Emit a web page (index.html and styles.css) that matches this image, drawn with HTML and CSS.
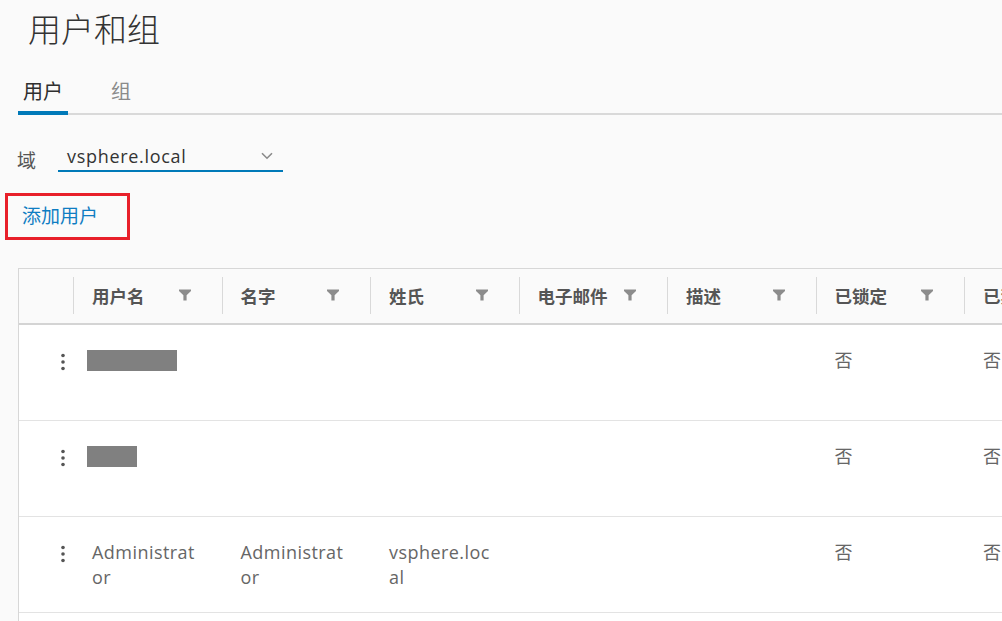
FILE: index.html
```html
<!DOCTYPE html>
<html lang="zh-CN">
<head>
<meta charset="utf-8">
<title>用户和组</title>
<link rel="stylesheet" href="styles.css">
</head>
<body>
<main class="page">
  <h1 class="title">用户和组</h1>

  <nav class="tabs">
    <div class="tab tab-active">用户</div>
    <div class="tab">组</div>
  </nav>

  <div class="domain">
    <span class="domain-label">域</span>
    <div class="select">
      <span class="select-value">vsphere.local</span>
      <svg class="chevron" width="12" height="8" viewBox="0 0 12 8"><path d="M1 1.2 L6 6.2 L11 1.2" fill="none" stroke="#8a8a8a" stroke-width="1.6"/></svg>
    </div>
  </div>

  <div class="actions">
    <div class="highlight"><a class="add-link">添加用户</a></div>
  </div>

  <div class="datagrid">
    <div class="grid-row grid-head">
      <div class="hcell hcell-blank"></div>
      <div class="hcell"><span>用户名</span><svg class="filter" width="12" height="12" viewBox="0 0 12 12"><path d="M0 0.5 H12 V2 L7.6 6.2 V11.5 H4.4 V6.2 L0 2 Z"/></svg></div>
      <div class="hcell"><span>名字</span><svg class="filter" width="12" height="12" viewBox="0 0 12 12"><path d="M0 0.5 H12 V2 L7.6 6.2 V11.5 H4.4 V6.2 L0 2 Z"/></svg></div>
      <div class="hcell"><span>姓氏</span><svg class="filter" width="12" height="12" viewBox="0 0 12 12"><path d="M0 0.5 H12 V2 L7.6 6.2 V11.5 H4.4 V6.2 L0 2 Z"/></svg></div>
      <div class="hcell"><span>电子邮件</span><svg class="filter" width="12" height="12" viewBox="0 0 12 12"><path d="M0 0.5 H12 V2 L7.6 6.2 V11.5 H4.4 V6.2 L0 2 Z"/></svg></div>
      <div class="hcell"><span>描述</span><svg class="filter" width="12" height="12" viewBox="0 0 12 12"><path d="M0 0.5 H12 V2 L7.6 6.2 V11.5 H4.4 V6.2 L0 2 Z"/></svg></div>
      <div class="hcell"><span>已锁定</span><svg class="filter" width="12" height="12" viewBox="0 0 12 12"><path d="M0 0.5 H12 V2 L7.6 6.2 V11.5 H4.4 V6.2 L0 2 Z"/></svg></div>
      <div class="hcell"><span>已禁用</span><svg class="filter" width="12" height="12" viewBox="0 0 12 12"><path d="M0 0.5 H12 V2 L7.6 6.2 V11.5 H4.4 V6.2 L0 2 Z"/></svg></div>
    </div>

    <div class="grid-row body-row">
      <div class="cell cell-action"><svg class="dots" width="6" height="18" viewBox="0 0 6 18"><circle cx="3" cy="2.5" r="1.8"/><circle cx="3" cy="9" r="1.8"/><circle cx="3" cy="15.5" r="1.8"/></svg></div>
      <div class="cell"><span class="redacted redacted-long"></span></div>
      <div class="cell"></div>
      <div class="cell"></div>
      <div class="cell"></div>
      <div class="cell"></div>
      <div class="cell">否</div>
      <div class="cell">否</div>
    </div>

    <div class="grid-row body-row">
      <div class="cell cell-action"><svg class="dots" width="6" height="18" viewBox="0 0 6 18"><circle cx="3" cy="2.5" r="1.8"/><circle cx="3" cy="9" r="1.8"/><circle cx="3" cy="15.5" r="1.8"/></svg></div>
      <div class="cell"><span class="redacted redacted-short"></span></div>
      <div class="cell"></div>
      <div class="cell"></div>
      <div class="cell"></div>
      <div class="cell"></div>
      <div class="cell">否</div>
      <div class="cell">否</div>
    </div>

    <div class="grid-row body-row">
      <div class="cell cell-action"><svg class="dots" width="6" height="18" viewBox="0 0 6 18"><circle cx="3" cy="2.5" r="1.8"/><circle cx="3" cy="9" r="1.8"/><circle cx="3" cy="15.5" r="1.8"/></svg></div>
      <div class="cell">Administrator</div>
      <div class="cell">Administrator</div>
      <div class="cell">vsphere.local</div>
      <div class="cell"></div>
      <div class="cell"></div>
      <div class="cell">否</div>
      <div class="cell">否</div>
    </div>

    <div class="grid-row body-row"></div>
  </div>
</main>
</body>
</html>
```

FILE: styles.css
```css
html, body {
  margin: 0;
  padding: 0;
  background: #fafafa;
  overflow: hidden;
}

body {
  font-family: "Open Sans", "Noto Sans CJK SC", sans-serif;
  color: #333;
}

.page {
  padding-left: 18px;
  width: 1200px;
}

.title {
  margin: 8px 0 0 10px;
  font-family: "Noto Sans CJK SC", sans-serif;
  font-size: 33px;
  line-height: 40px;
  font-weight: 300;
  color: #333;
}

.tabs {
  display: flex;
  gap: 38px;
  margin-top: 31px;
  border-bottom: 2px solid #d9d9d9;
  width: 984px;
}

.tab {
  font-family: "Noto Sans CJK SC", sans-serif;
  font-size: 20px;
  line-height: 24px;
  padding: 0 5px 8px;
  margin-bottom: -2px;
  border-bottom: 4px solid transparent;
  color: #8a8a8a;
}

.tab-active {
  color: #2f2f2f;
  border-bottom-color: #0079b8;
}

.domain {
  display: flex;
  align-items: flex-end;
  margin-top: 30px;
}

.domain-label {
  font-family: "Noto Sans CJK SC", sans-serif;
  font-size: 19px;
  line-height: 24px;
  color: #555;
  width: 41px;
  margin-left: -1px;
  padding-bottom: 0;
}

.select {
  display: flex;
  align-items: center;
  justify-content: space-between;
  width: 225px;
  box-sizing: border-box;
  height: 27px;
  padding: 0 10px 3px 9px;
  border-bottom: 2px solid #0079b8;
}

.select-value {
  font-size: 18px;
  line-height: 24px;
  color: #333;
  letter-spacing: 0.7px;
}

.chevron {
  display: block;
}

.actions {
  margin-top: 21px;
}

.highlight {
  display: inline-block;
  margin-left: -13px;
  border: 3px solid #e8202a;
  padding: 7px 29px 10px 14px;
}

.add-link {
  display: block;
  font-family: "Noto Sans CJK SC", sans-serif;
  font-size: 19px;
  line-height: 24px;
  color: #0f7dc2;
}

.datagrid {
  margin-top: 28px;
  border-top: 1px solid #d7d7d7;
  border-left: 1px solid #d7d7d7;
  width: 1094px;
}

.grid-row {
  display: grid;
  grid-template-columns: 54px repeat(7, 148.5px);
}

.grid-head {
  height: 52px;
  padding-bottom: 2px;
  align-items: center;
  background: #fafafa;
  border-bottom: 2px solid #d4d4d4;
}

.hcell {
  display: flex;
  align-items: center;
  justify-content: space-between;
  height: 37px;
  padding: 0 31px 0 18px;
  border-left: 1px solid #d9d9d9;
  font-family: "Noto Sans CJK SC", sans-serif;
  font-weight: 700;
  font-size: 17.5px;
  color: #555;
}

.hcell-blank {
  border-left: none;
}

.filter {
  fill: #8c8c8c;
  flex: none;
}

.body-row {
  height: 95px;
  background: #fff;
  border-bottom: 1px solid #e3e3e3;
}

.cell {
  padding: 23px 20px 0 19px;
  font-size: 18px;
  line-height: 25px;
  letter-spacing: 0.45px;
  color: #666;
  word-break: break-all;
}

.cell-action {
  display: flex;
  justify-content: flex-end;
  padding: 28px 7px 0 0;
}

.dots {
  fill: #555;
}

.redacted {
  display: block;
  height: 21px;
  margin: 2px 0 0 -5px;
  background: #808080;
}

.redacted-long {
  width: 90px;
}

.redacted-short {
  width: 50px;
}
```
